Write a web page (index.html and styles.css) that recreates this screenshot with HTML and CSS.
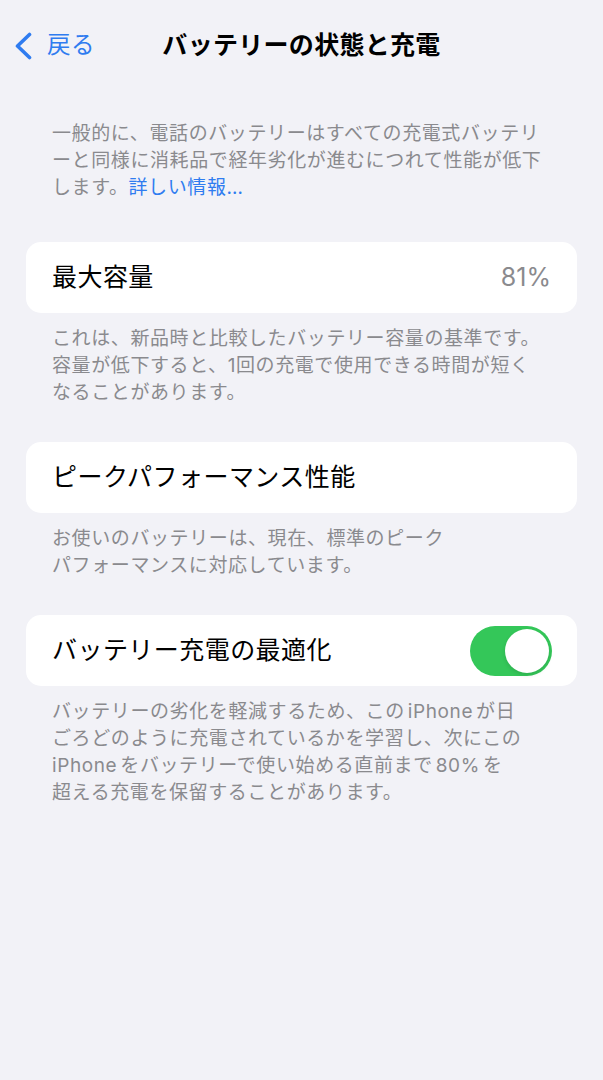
FILE: index.html
```html
<!DOCTYPE html>
<html lang="ja">
<head>
<meta charset="utf-8">
<title>バッテリーの状態と充電</title>
<link rel="stylesheet" href="styles.css">
</head>
<body class="page">
  <header class="nav">
    <a class="back" href="#">
      <svg class="chevron" width="20" height="28" viewBox="0 0 20 28" aria-hidden="true">
        <polyline points="15.5,2.5 3.5,14 15.5,25.5" fill="none" stroke="#2f7cf0" stroke-width="3.6" stroke-linecap="round" stroke-linejoin="round"/>
      </svg>
      <span class="back-label">戻る</span>
    </a>
    <h1 class="title">バッテリーの状態と充電</h1>
    <span class="nav-spacer"></span>
  </header>

  <main class="content">
    <p class="intro">一般的に、電話のバッテリーはすべての充電式バッテリ<br>ーと同様に消耗品で経年劣化が進むにつれて性能が低下<br>します。<a class="link" href="#">詳しい情報…</a></p>

    <section class="group first">
      <div class="cell">
        <span class="cell-label">最大容量</span>
        <span class="cell-value">81%</span>
      </div>
      <p class="footer">これは、新品時と比較したバッテリー容量の基準です。<br>容量が低下すると、1回の充電で使用できる時間が短く<br>なることがあります。</p>
    </section>

    <section class="group">
      <div class="cell">
        <span class="cell-label">ピークパフォーマンス性能</span>
      </div>
      <p class="footer">お使いのバッテリーは、現在、標準のピーク<br>パフォーマンスに対応しています。</p>
    </section>

    <section class="group">
      <div class="cell">
        <span class="cell-label">バッテリー充電の最適化</span>
        <span class="switch on"><span class="knob"></span></span>
      </div>
      <p class="footer">バッテリーの劣化を軽減するため、この<span class="latin">iPhone</span>が日<br>ごろどのように充電されているかを学習し、次にこの<br><span class="latin lead">iPhone</span>をバッテリーで使い始める直前まで<span class="latin">80%</span>を<br>超える充電を保留することがあります。</p>
    </section>
  </main>
</body>
</html>
```

FILE: styles.css
```css
* {
  box-sizing: border-box;
}

html, body {
  margin: 0;
  padding: 0;
}

.page {
  width: 603px;
  min-height: 1080px;
  background: #f2f2f7;
  font-family: Inter, "Noto Sans CJK JP", sans-serif;
  color: #000;
}

.nav {
  display: grid;
  grid-template-columns: 1fr auto 1fr;
  align-items: center;
  height: 50px;
  margin-top: 20px;
  padding: 0 14px;
}

.back {
  display: flex;
  align-items: center;
  gap: 13px;
  text-decoration: none;
  color: #2f7cf0;
}

.chevron {
  display: block;
  margin-top: 1px;
}

.back-label {
  font-size: 23.5px;
  line-height: 1;
  letter-spacing: 0.5px;
}

.title {
  margin: 0;
  font-size: 25px;
  font-weight: 700;
  line-height: 1;
  letter-spacing: 0.3px;
  white-space: nowrap;
}

.content {
  padding: 0 26px;
}

.intro,
.footer {
  margin: 0;
  padding: 0 26px;
  font-size: 19px;
  line-height: 27px;
  letter-spacing: 0.6px;
  color: #8a8a8e;
  white-space: nowrap;
}

.intro {
  margin-top: 50px;
}

.link {
  color: #2f7cf0;
  text-decoration: none;
}

.latin {
  margin: 0 3px;
}

.latin.lead {
  margin-left: 0;
}

.group {
  margin-top: 36px;
}

.group.first {
  margin-top: 41px;
}

.cell {
  display: flex;
  align-items: center;
  justify-content: space-between;
  height: 71px;
  padding: 0 25px 0 26px;
  background: #fff;
  border-radius: 15px;
}

.cell-label {
  font-size: 25px;
  line-height: 1;
  letter-spacing: 0.45px;
  white-space: nowrap;
}

.cell-value {
  font-size: 25px;
  line-height: 1;
  color: #8a8a8e;
  margin-right: 1px;
}

.footer {
  margin-top: 12px;
}

.switch {
  position: relative;
  display: block;
  width: 82px;
  height: 50px;
  border-radius: 25px;
  background: #34c759;
}

.switch .knob {
  position: absolute;
  top: 3px;
  right: 3px;
  width: 44px;
  height: 44px;
  border-radius: 50%;
  background: #fff;
  box-shadow: 0 2px 4px rgba(0, 0, 0, 0.12);
}
```
